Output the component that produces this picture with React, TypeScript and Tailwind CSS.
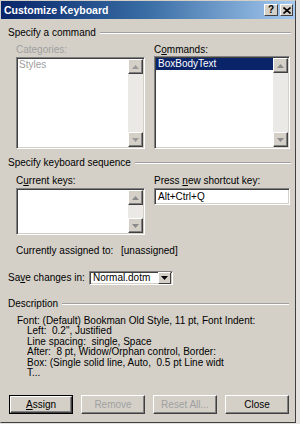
import React from "react";

function Arrow({ up, disabled }: { up?: boolean; disabled?: boolean }) {
  return (
    <div className="w-[15px] h-[15px] bg-[#d4d0c8] border border-t-white border-l-white border-r-[#404040] border-b-[#404040] shadow-[inset_-1px_-1px_0_#808080] flex items-center justify-center">
      <svg width="7" height="4" viewBox="0 0 7 4">
        {up ? (
          <polygon points="3.5,0 7,4 0,4" fill={disabled ? "#9a9a9a" : "#8a8a8a"} />
        ) : (
          <polygon points="0,0 7,0 3.5,4" fill={disabled ? "#9a9a9a" : "#8a8a8a"} />
        )}
      </svg>
    </div>
  );
}

function ScrollBar({ disabled }: { disabled?: boolean }) {
  return (
    <div className="w-[15px] h-full flex flex-col bg-[#ebe9e5]">
      <Arrow up disabled={disabled} />
      <div className="flex-1" />
      <Arrow disabled={disabled} />
    </div>
  );
}

function GroupHeader({ title }: { title: string }) {
  return (
    <div className="flex items-center h-[13px] gap-[4px]">
      <span className="whitespace-nowrap">{title}</span>
      <div className="flex-1 h-[2px] border-t border-t-[#a0a0a0] border-b border-b-white" />
    </div>
  );
}

const sunken =
  "border border-t-[#808080] border-l-[#808080] border-r-white border-b-white shadow-[inset_1px_1px_0_#404040,inset_-1px_-1px_0_#d4d0c8]";

function Button({ label, disabled, isDefault }: { label: React.ReactNode; disabled?: boolean; isDefault?: boolean }) {
  return (
    <div className={`w-[64px] h-[19px] flex ${isDefault ? "border border-black" : ""}`}>
      <div
        className={`w-full h-full flex items-center justify-center bg-[#d4d0c8] border border-t-white border-l-white border-r-[#404040] border-b-[#404040] shadow-[inset_-1px_-1px_0_#808080] ${
          disabled ? "text-[#a0a0a0]" : "text-black"
        }`}
      >
        {label}
      </div>
    </div>
  );
}

export default function App() {
  return (
    <div className="w-[300px] h-[424px] bg-[#e4e2de] font-['Liberation_Sans',Arial,sans-serif] text-[10px] text-black leading-none whitespace-nowrap">
      <div className="w-[296px] h-[423px] bg-[#d4d0c8] border border-t-[#d4d0c8] border-l-[#d4d0c8] border-r-[#404040] border-b-[#404040] flex flex-col">
        {/* title bar */}
        <div className="h-[18px] flex items-center bg-gradient-to-r from-[#0a246a] via-[#3a6ea5] to-[#a6caf0] pl-[3px] pr-[2px]">
          <span className="font-bold text-white text-[10.5px] flex-1">Customize Keyboard</span>
          <div className="flex gap-[2px]">
            <div className="w-[14px] h-[12px] bg-[#d4d0c8] border border-t-white border-l-white border-r-[#404040] border-b-[#404040] flex items-center justify-center font-bold text-[10px]">
              ?
            </div>
            <div className="w-[13px] h-[12px] bg-[#d4d0c8] border border-t-white border-l-white border-r-[#404040] border-b-[#404040] flex items-center justify-center">
              <svg width="8" height="7" viewBox="0 0 8 7">
                <path d="M0.5 0.5 L7.5 6.5 M7.5 0.5 L0.5 6.5" stroke="#000" strokeWidth="1.6" />
              </svg>
            </div>
          </div>
        </div>

        <div className="flex flex-col pl-[7px] pr-[4px]">
          <div className="mt-[7px]">
            <GroupHeader title="Specify a command" />
          </div>

          <div className="flex mt-[4px] pl-[8px] gap-[9px]">
            <div className="w-[129px] flex flex-col">
              <div className="h-[13px] flex items-center text-[#a0a0a0]">Categories:</div>
              <div className={`mt-[1px] h-[92px] bg-white flex ${sunken}`}>
                <div className="flex-1 pl-[2px] pt-[2px] text-[#a0a0a0]">Styles</div>
                <div className="py-[1px] pr-[1px]">
                  <ScrollBar disabled />
                </div>
              </div>
            </div>
            <div className="w-[136px] flex flex-col">
              <div className="h-[13px] flex items-center">
                <span>
                  C<span className="underline">o</span>mmands:
                </span>
              </div>
              <div className={`h-[93px] bg-white flex ${sunken}`}>
                <div className="flex-1 pl-[1px] pt-[1px]">
                  <div className="h-[12px] bg-[#0a246a] text-white pl-[2px] flex items-center">BoxBodyText</div>
                </div>
                <div className="py-[1px] pr-[1px]">
                  <ScrollBar />
                </div>
              </div>
            </div>
          </div>

          <div className="mt-[7px]">
            <GroupHeader title="Specify keyboard sequence" />
          </div>

          <div className="flex mt-[5px] pl-[8px] gap-[9px]">
            <div className="w-[129px] flex flex-col">
              <div className="h-[13px] flex items-center">
                <span>
                  C<span className="underline">u</span>rrent keys:
                </span>
              </div>
              <div className={`mt-[1px] h-[47px] bg-white flex ${sunken}`}>
                <div className="flex-1" />
                <div className="py-[1px] pr-[1px]">
                  <ScrollBar />
                </div>
              </div>
            </div>
            <div className="w-[136px] flex flex-col">
              <div className="h-[13px] flex items-center">
                <span>
                  Press <span className="underline">n</span>ew shortcut key:
                </span>
              </div>
              <div className={`mt-[1px] h-[17px] bg-white flex items-center pl-[3px] ${sunken}`}>Alt+Ctrl+Q</div>
            </div>
          </div>

          <div className="flex mt-[9px] pl-[8px] h-[13px] items-center">
            <span className="w-[105px]">Currently assigned to:</span>
            <span>[unassigned]</span>
          </div>

          <div className="flex mt-[14px] items-center">
            <span className="w-[81px]">
              Sa<span className="underline">v</span>e changes in:
            </span>
            <div className={`w-[84px] h-[14px] bg-white flex items-center ${sunken}`}>
              <span className="flex-1 pl-[3px]">Normal.dotm</span>
              <div className="w-[13px] h-[12px] mr-[1px] bg-[#d4d0c8] border border-t-white border-l-white border-r-[#404040] border-b-[#404040] flex items-center justify-center">
                <svg width="7" height="4" viewBox="0 0 7 4">
                  <polygon points="0,0 7,0 3.5,4" fill="#000" />
                </svg>
              </div>
            </div>
          </div>

          <div className="mt-[12px] pr-[2px]">
            <GroupHeader title="Description" />
          </div>

          <div className="mt-[6px] pl-[9px] text-[10px] leading-[10.4px] flex flex-col whitespace-pre">
            <span>Font: (Default) Bookman Old Style, 11 pt, Font Indent:</span>
            <span className="pl-[10px]">Left:  0.2", Justified</span>
            <span className="pl-[10px]">Line spacing:  single, Space</span>
            <span className="pl-[10px]">After:  8 pt, Widow/Orphan control, Border:</span>
            <span className="pl-[10px]">Box: (Single solid line, Auto,  0.5 pt Line widt</span>
            <span className="pl-[10px]">T...</span>
          </div>

          <div className="flex mt-[17px] gap-[8px] pl-[1px]">
            <Button
              isDefault
              label={
                <span>
                  <span className="underline">A</span>ssign
                </span>
              }
            />
            <Button disabled label="Remove" />
            <Button disabled label="Reset All..." />
            <Button label="Close" />
          </div>
        </div>
      </div>
    </div>
  );
}
